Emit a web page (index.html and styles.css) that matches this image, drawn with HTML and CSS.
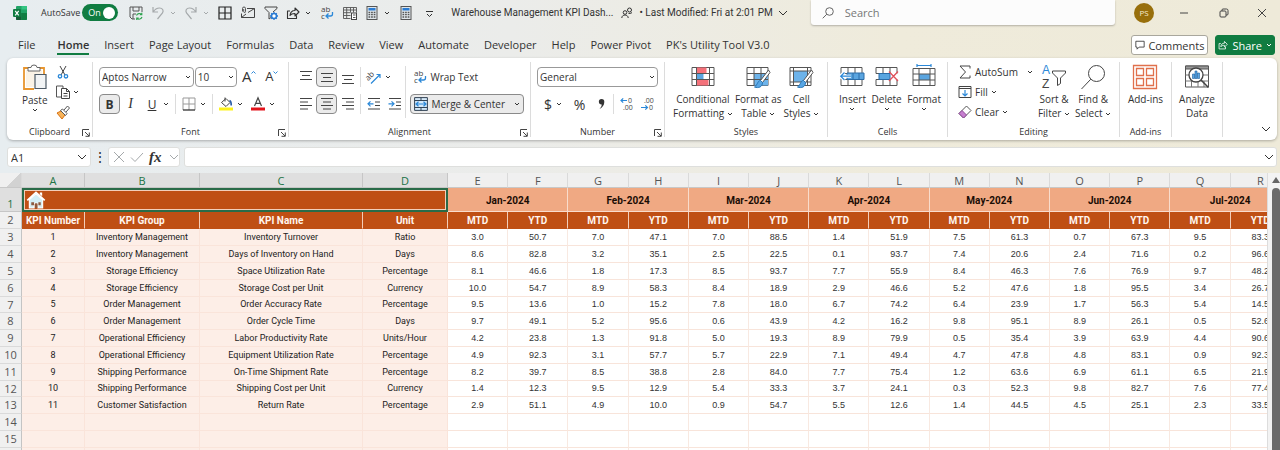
FILE: index.html
```html
<!DOCTYPE html>
<html lang="en">
<head>
    <meta charset="UTF-8">
    <meta name="viewport" content="width=device-width, initial-scale=1.0">
    <title>Warehouse Management KPI Dashboard</title>
    <link rel="stylesheet" href="styles.css">
</head>
<body>
    <!-- Shared symbols -->
    <svg class="symbols" aria-hidden="true">
        <symbol id="chev" viewBox="0 0 6 6"><path d="M1 2l2 2 2-2" fill="none" stroke="currentColor" stroke-width="1"/></symbol>
        <symbol id="chev-lg" viewBox="0 0 10 10"><path d="M1 3l4 4 4-4" fill="none" stroke="currentColor" stroke-width="1"/></symbol>
        <symbol id="launch" viewBox="0 0 8 8"><path d="M.5 7V.5H7M3 3l4 4M7.3 3.5v3.8H3.5" fill="none" stroke="#444" stroke-width="1"/></symbol>
        <symbol id="calc" viewBox="0 0 12 14">
            <rect x="1" y=".5" width="10" height="13" fill="#dfe6ea" stroke="#555"/>
            <rect x="2.5" y="2" width="7" height="2.5" fill="#2b7cd3"/>
            <path d="M2.500 6.500h7M2.500 8.700h7M2.500 11h7" stroke="#555" stroke-width="1.300" stroke-dasharray="1.700 .9"/>
        </symbol>
        <symbol id="wrap" viewBox="0 0 14 14">
            <text x="1" y="6" font-size="8" fill="#444" stroke="none">ab</text>
            <text x="1" y="13" font-size="8" fill="#444" stroke="none">c</text>
            <path d="M12.500 6v2q0 2-2 2H6.500M8.500 7.500L6 10l2.500 2.500" fill="none" stroke="#2b88d8" stroke-width="1.300"/>
        </symbol>
        <symbol id="share" viewBox="0 0 14 14"><path d="M4 5H1.500v7.500h9V9.500M4 9.500C4.300 6 6 4.500 9 4.500V2l4 4-4 4V7.500C6.500 7.400 5 8 4 9.500z" fill="none" stroke="currentColor" stroke-width="1.100" stroke-linejoin="round"/></symbol>
    </svg>

    <header class="title-bar">
        <svg class="app-logo" viewBox="0 0 14 14"><rect x="3" y="0" width="11" height="14" rx="1" fill="#21a366"/><path d="M3 7h5.500v7H4q-1 0-1-1z" fill="#185c37"/><path d="M8.500 7H14v6q0 1-1 1H8.500z" fill="#107c41"/><path d="M8.500 0H13q1 0 1 1v2.500H8.500z" fill="#33c481"/><rect y="3" width="8" height="8" rx="1" fill="#107c41"/><path d="M2.200 4.800l3.500 4.500M5.700 4.800L2.200 9.300" stroke="#fff" stroke-width="1.200"/></svg>
        <label class="autosave">AutoSave
            <span class="toggle"><input type="checkbox" checked><span>On</span></span>
        </label>
        <div class="quick-tools">
            <button class="tool" aria-label="Save"><svg viewBox="0 0 14 14"><path d="M6 13H3L1 11V1h12v5M4 1v4h6V1M4 13V8h3" fill="none" stroke="#555"/><path d="M7.500 9.500a3 3 0 015-1M13 11a3 3 0 01-5 1.300M12.800 6.800v2h-2M7.700 14v-2h2" fill="none" stroke="#2ea44f" stroke-width="1.100"/></svg></button>
            <button class="tool drop faded" aria-label="Undo"><svg viewBox="0 0 14 14"><path d="M2 1v5h5M2.200 6C4 3 6 2 8.500 2c3 0 4.500 2.500 3 5L6.500 13" fill="none" stroke="currentColor" stroke-width="1.200"/></svg><svg class="chev"><use href="#chev"/></svg></button>
            <button class="tool drop faded" aria-label="Redo"><svg viewBox="0 0 14 14"><path d="M12 1v5H7M11.800 6C10 3 8 2 5.500 2c-3 0-4.500 2.500-3 5l5 6" fill="none" stroke="currentColor" stroke-width="1.200"/></svg><svg class="chev"><use href="#chev"/></svg></button>
            <button class="tool" aria-label="Borders"><svg viewBox="0 0 14 14"><path d="M1 1h12v12H1zM7 1v12M1 7h12" fill="none" stroke="#222" stroke-width="1.200"/></svg></button>
            <button class="tool" aria-label="Email"><svg viewBox="0 0 14 14"><path d="M6 2.500h7.500v9H.5V7.500M7 6.500l6.500-4M.5 11.500L5 8" fill="none" stroke="#444"/><path d="M1.500 5.500V2.500q0-1.500 1.500-1.500t1.500 1.500v3q0 1-.9 1t-.9-1V3" fill="none" stroke="#444" stroke-width=".9"/></svg></button>
            <button class="tool" aria-label="Filter"><svg viewBox="0 0 14 14"><path d="M1 1h12v1.500L9 6M1 1v1.500l4 4V13l2-1.500" fill="none" stroke="#444"/><circle cx="10" cy="10" r="2.500" fill="#fff" stroke="#2b7cd3" stroke-width="1.600"/><path d="M10 6v1.500M10 12.500V14M6 10h1.500M12.500 10H14M7.200 7.200l1 1M11.800 11.800l1 1M12.800 7.200l-1 1M7.200 12.800l1-1" stroke="#2b7cd3" stroke-width="1.300"/></svg></button>
            <button class="tool drop" aria-label="Send"><svg><use href="#share"/></svg><svg class="chev"><use href="#chev"/></svg></button>
            <button class="tool" aria-label="Wrap text"><svg><use href="#wrap"/></svg></button>
            <button class="tool" aria-label="Calculate sheet"><svg viewBox="0 0 14 14"><path d="M7.500 12.500H.5V1.500h13v5M.5 4h13M.5 6.700h7M.5 9.500h7M3.700 1.500v11M7.500 1.500v5M10.500 1.500v5" fill="none" stroke="#555" stroke-width=".9"/><rect x="8.500" y="7" width="5" height="6.500" fill="#fff" stroke="#444"/><path d="M10 9h2.500M10 11.500h2.500" stroke="#555"/></svg></button>
            <button class="tool drop" aria-label="Calculation options"><svg><use href="#calc"/></svg><svg class="chev"><use href="#chev"/></svg></button>
            <button class="tool" aria-label="Calculate now"><svg><use href="#calc"/></svg></button>
            <button class="tool" aria-label="Customize toolbar"><svg viewBox="0 0 14 14"><path d="M4 5.500h7M5 8l2.500 2.500L10 8" fill="none" stroke="#333"/></svg></button>
        </div>
        <div class="file-name">
            <span>Warehouse Management KPI Dash...</span>
            <svg class="people" viewBox="0 0 12 12"><circle cx="4" cy="5.500" r="1.800"/><path d="M.8 11c0-4 6.400-4 6.400 0"/><circle cx="8.500" cy="3" r="2"/><path d="M7.500 6.500q3 0 3.500-1"/></svg>
            <button class="modified">• Last Modified: Fri at 2:01 PM <svg><use href="#chev-lg"/></svg></button>
        </div>
        <label class="search">
            <svg viewBox="0 0 12 12"><circle cx="7.500" cy="4.500" r="3.800"/><path d="M4.800 7.200L.7 11.300"/></svg>
            <input type="text" placeholder="Search" aria-label="Search">
        </label>
        <div class="window-controls">
            <span class="avatar">PS</span>
            <button aria-label="Minimize"><svg viewBox="0 0 10 10"><path d="M1 5h8"/></svg></button>
            <button aria-label="Restore"><svg viewBox="0 0 10 10"><rect x="1" y="3" width="6" height="6" rx="1"/><path d="M3 3V2q0-1 1-1h3.500Q9 1 9 2.500V6q0 1-1 1H7"/></svg></button>
            <button aria-label="Close"><svg viewBox="0 0 10 10"><path d="M1 1l8 8M9 1L1 9"/></svg></button>
        </div>
    </header>

    <nav class="tabs">
        <a href="#" class="file">File</a>
        <a href="#" class="active">Home</a>
        <a href="#">Insert</a>
        <a href="#">Page Layout</a>
        <a href="#">Formulas</a>
        <a href="#">Data</a>
        <a href="#">Review</a>
        <a href="#">View</a>
        <a href="#">Automate</a>
        <a href="#">Developer</a>
        <a href="#">Help</a>
        <a href="#">Power Pivot</a>
        <a href="#">PK's Utility Tool V3.0</a>
        <div class="tab-actions">
            <button class="comments"><svg viewBox="0 0 12 12"><path d="M1 1.500h10v7H5L2.500 11V8.500H1z" fill="none" stroke="#333"/></svg>Comments</button>
            <button class="share"><svg><use href="#share"/></svg>Share<svg class="chev"><use href="#chev"/></svg></button>
        </div>
    </nav>

    <section class="ribbon">
        <div class="group clipboard">
            <div class="group-body">
                <button class="big"><svg class="paste-icon" viewBox="0 0 24 27"><path d="M11 25H1V4h20v6" fill="#fff" stroke="#e8952e" stroke-width="1.800"/><path d="M3 6h16v4h-7v13H3z" fill="#fbf3e6"/><path d="M5 7V3.500h3q0-2.500 3-2.500t3 2.500h3V7z" fill="#fff" stroke="#666"/><path d="M12 10.500h11v14H12z" fill="#f2f4f5" stroke="#4d5a66" stroke-width="1.200"/></svg><span>Paste</span><svg class="chev"><use href="#chev"/></svg></button>
                <div class="stack">
                    <button class="tool" aria-label="Cut"><svg viewBox="0 0 14 14"><path d="M4 1l5 9M10 1L5 10" stroke="#444" fill="none"/><circle cx="4" cy="11.300" r="1.700" fill="none" stroke="#2b88d8" stroke-width="1.300"/><circle cx="10" cy="11.300" r="1.700" fill="none" stroke="#2b88d8" stroke-width="1.300"/></svg></button>
                    <button class="tool drop" aria-label="Copy"><svg viewBox="0 0 14 14"><path d="M5 12H.5V1H7v2" fill="none" stroke="#555"/><path d="M5.500 3.500h5l3 3v7h-8zM10.500 3.500v3h3M7.500 8.500h4M7.500 11h4" fill="#fff" stroke="#444"/></svg><svg class="chev"><use href="#chev"/></svg></button>
                    <button class="tool" aria-label="Format painter"><svg viewBox="0 0 14 14"><path d="M1 8l4-2 4 4-3 4z" fill="#f7b45b" stroke="#d9700f"/><path d="M4.500 5.500l5 5 1.500-2-4.500-4.500zM8 5l3.500-4 2 2L10 7" fill="#fff" stroke="#555"/></svg></button>
                </div>
            </div>
            <div class="group-label">Clipboard<button aria-label="Clipboard settings"><svg><use href="#launch"/></svg></button></div>
        </div>

        <div class="group font">
            <div class="group-body rows">
                <div class="row">
                    <select class="font-name" aria-label="Font"><option>Aptos Narrow</option></select>
                    <select class="font-size" aria-label="Font size"><option>10</option></select>
                    <button class="tool letter" aria-label="Increase font size">A<svg class="caret" viewBox="0 0 5 5"><path d="M.5 3.500l2-2 2 2"/></svg></button>
                    <button class="tool letter small" aria-label="Decrease font size">A<svg class="caret" viewBox="0 0 5 5"><path d="M.5 1.500l2 2 2-2"/></svg></button>
                </div>
                <div class="row">
                    <button class="tool pressed" aria-label="Bold"><b>B</b></button>
                    <button class="tool italic" aria-label="Italic">I</button>
                    <button class="tool drop" aria-label="Underline"><u>U</u><svg class="chev"><use href="#chev"/></svg></button>
                    <span class="sep"></span>
                    <button class="tool drop" aria-label="Borders"><svg viewBox="0 0 14 14"><path d="M1 1h12M1 1v12M13 1v12M7 1v12M1 7h12" stroke="#999" fill="none"/><path d="M1 13h12" stroke="#333" stroke-width="1.300"/></svg><svg class="chev"><use href="#chev"/></svg></button>
                    <span class="sep"></span>
                    <button class="tool drop" aria-label="Fill color"><svg viewBox="0 0 14 14"><path d="M2.500 5.500L7 1.500l4 4-4 4zM6 .5v4" fill="#fff" stroke="#444"/><path d="M10.500 3.500q2 1 1.700 5" fill="none" stroke="#2b5fa8" stroke-width="1.600"/><path d="M0 10.500h14v3H0z" fill="#fdf21c"/></svg><svg class="chev"><use href="#chev"/></svg></button>
                    <button class="tool drop" aria-label="Font color"><svg viewBox="0 0 14 14"><path d="M3.500 9L7 .8 10.500 9M4.700 6.300h4.600" fill="none" stroke="#444" stroke-width="1.200"/><path d="M0 10.500h14v3H0z" fill="#e3131b"/></svg><svg class="chev"><use href="#chev"/></svg></button>
                </div>
            </div>
            <div class="group-label">Font<button aria-label="Font settings"><svg><use href="#launch"/></svg></button></div>
        </div>

        <div class="group alignment">
            <div class="group-body">
                <div class="rows">
                    <div class="row">
                        <button class="tool" aria-label="Top align"><svg viewBox="0 0 14 14"><path d="M1 1.500h12M3 5.500h8M1 9.500h12"/></svg></button>
                        <button class="tool pressed" aria-label="Middle align"><svg viewBox="0 0 14 14"><path d="M1 3.500h12M3 7.500h8M1 11.500h12"/></svg></button>
                        <button class="tool" aria-label="Bottom align"><svg viewBox="0 0 14 14"><path d="M1 5.500h12M3 9.500h8M1 13.500h12"/></svg></button>
                        <span class="sep"></span>
                        <button class="tool drop" aria-label="Orientation"><svg viewBox="0 0 14 14"><text x="-1" y="8" font-size="8" transform="rotate(-45 4 7)" class="glyph">ab</text><path d="M4 13.500l9-9M9.500 4.500H13V8" class="blue"/></svg><svg class="chev"><use href="#chev"/></svg></button>
                    </div>
                    <div class="row">
                        <button class="tool" aria-label="Align left"><svg viewBox="0 0 14 14"><path d="M1 1.500h12M1 5h8M1 8.500h12M1 12h8"/></svg></button>
                        <button class="tool pressed" aria-label="Center"><svg viewBox="0 0 14 14"><path d="M1 1.500h12M3 5h8M1 8.500h12M3 12h8"/></svg></button>
                        <button class="tool" aria-label="Align right"><svg viewBox="0 0 14 14"><path d="M1 1.500h12M5 5h8M1 8.500h12M5 12h8"/></svg></button>
                        <span class="sep"></span>
                        <button class="tool" aria-label="Decrease indent"><svg viewBox="0 0 14 14"><path d="M1 1.500h12M8 5h5M8 8.500h5M1 12h12"/><path d="M6.500 6.800H1M3.500 4.300L1 6.800l2.500 2.500" class="blue"/></svg></button>
                        <button class="tool" aria-label="Increase indent"><svg viewBox="0 0 14 14"><path d="M1 1.500h12M8 5h5M8 8.500h5M1 12h12"/><path d="M.5 6.800H6M3.500 4.300L6 6.800 3.500 9.300" class="blue"/></svg></button>
                    </div>
                </div>
                <span class="sep tall"></span>
                <div class="rows">
                    <button class="wide"><svg><use href="#wrap"/></svg>Wrap Text</button>
                    <button class="wide pressed"><svg viewBox="0 0 14 14"><path d="M.6.600h12.800v12.800H.6z" fill="#d5e9f9" stroke="#345"/><path d="M.6 3.500h12.800M.6 10.500h12.800M7 .6v3M7 10.500v3" stroke="#345" fill="none"/><path d="M2 7h10M4.500 4.800L2 7l2.500 2.200M9.500 4.800L12 7 9.500 9.200" class="blue"/></svg>Merge &amp; Center<svg class="chev"><use href="#chev"/></svg></button>
                </div>
            </div>
            <div class="group-label">Alignment<button aria-label="Alignment settings"><svg><use href="#launch"/></svg></button></div>
        </div>

        <div class="group number">
            <div class="group-body rows">
                <div class="row"><select class="number-format" aria-label="Number format"><option>General</option></select></div>
                <div class="row">
                    <button class="tool drop sign" aria-label="Currency">$<svg class="chev"><use href="#chev"/></svg></button>
                    <button class="tool sign" aria-label="Percent">%</button>
                    <button class="tool" aria-label="Comma style"><svg viewBox="0 0 14 14"><path d="M7.500 2a2.800 2.800 0 012.800 3C10.300 8 8.500 10.500 5.500 12c1.500-1.800 2.300-3 2.200-4.500A2.700 2.700 0 117.500 2z" fill="#333"/></svg></button>
                    <span class="sep"></span>
                    <button class="tool" aria-label="Increase decimal"><svg viewBox="0 0 14 14"><path d="M7 3.500H1M3.200 1.300L1 3.500l2.200 2.200" class="blue"/><text x="8" y="6" font-size="7" class="glyph">0</text><text x="3" y="13" font-size="7" class="glyph">.00</text></svg></button>
                    <button class="tool" aria-label="Decrease decimal"><svg viewBox="0 0 14 14"><path d="M0 10.500h6.500M4.300 8.300l2.200 2.200-2.200 2.200" class="blue"/><text x="3" y="6" font-size="7" class="glyph">.00</text><text x="8" y="13" font-size="7" class="glyph">0</text></svg></button>
                </div>
            </div>
            <div class="group-label">Number<button aria-label="Number settings"><svg><use href="#launch"/></svg></button></div>
        </div>

        <div class="group styles">
            <div class="group-body">
                <button class="big"><svg viewBox="0 0 24 24"><path d="M1 2.500h22v18H1z" fill="#fff" stroke="#555"/><path d="M5.500 2.500h10v6h-10zM5.500 14.500h12v6h-12z" fill="#f4717a"/><path d="M5.500 8.500h7v6h-7z" fill="#5aa5e0"/><path d="M1 8.500h22M1 14.500h22M5.500 2.500v18M18.500 2.500v18" stroke="#555" fill="none"/></svg><span>Conditional<br>Formatting <svg class="chev"><use href="#chev"/></svg></span></button>
                <button class="big"><svg viewBox="0 0 24 24"><path d="M1 2.500h21v18H1z" fill="#fff" stroke="#555"/><path d="M8 8.500h14v12H8z" fill="#6db3ea"/><path d="M1 8.500h21M1 14.500h21M8 2.500v18M15 2.500v18" stroke="#555" fill="none"/><path d="M22.500 5l-8 10.500 2 2L24 7.500z" fill="#fff" stroke="#555"/><path d="M14.500 15.500c-3 0-2.500 4-6 6.500 4 1.500 8 0 8-4.500z" fill="#58a6e4" stroke="#2b78b8"/></svg><span>Format as<br>Table <svg class="chev"><use href="#chev"/></svg></span></button>
                <button class="big"><svg viewBox="0 0 24 24"><path d="M1 2.500h21v18H1z" fill="#fff" stroke="#555"/><path d="M4.500 6h14v11h-14z" fill="#6db3ea"/><path d="M1 6h21M1 17h21M4.500 2.500v18M18.500 2.500v18" stroke="#555" fill="none"/><path d="M22.500 5l-8 10.500 2 2L24 7.500z" fill="#fff" stroke="#555"/><path d="M14.500 15.500c-3 0-2.500 4-6 6.500 4 1.500 8 0 8-4.500z" fill="#58a6e4" stroke="#2b78b8"/></svg><span>Cell<br>Styles <svg class="chev"><use href="#chev"/></svg></span></button>
            </div>
            <div class="group-label">Styles</div>
        </div>

        <div class="group cells">
            <div class="group-body">
                <button class="big"><svg viewBox="0 0 24 24"><path d="M1 2.500h21v18H1z" fill="#fff" stroke="#555"/><path d="M1 8.500h21M1 14.500h21M8 2.500v18M15 2.500v18" stroke="#555" fill="none"/><path d="M7 8h17v6.500H7z" fill="#5aa5e0" stroke="#2b6ca8"/><path d="M13 8v6.500M19 8v6.500" stroke="#2b6ca8"/><path d="M11 11.200H0M4.500 7L0 11.200l4.500 4.300" fill="none" stroke="#fff" stroke-width="3"/><path d="M11 11.200H.7M4.500 7.500L.7 11.200l3.800 3.800" class="blue"/></svg><span>Insert</span><svg class="chev"><use href="#chev"/></svg></button>
                <button class="big"><svg viewBox="0 0 24 24"><path d="M1 8.500v-6h21v6M1 14.500v6h21v-6M8 2.500v6M15 2.500v6M8 14.500v6M15 14.500v6M1 8.500h14M1 14.500h14" fill="none" stroke="#555"/><path d="M4 8.500h11v6H4z" fill="#5aa5e0" stroke="#2b6ca8"/><path d="M14 6.500l9 9.500M23 6.500L14 16" stroke="#e0525c" stroke-width="1.300" fill="none"/></svg><span>Delete</span><svg class="chev"><use href="#chev"/></svg></button>
                <button class="big"><svg viewBox="0 0 24 24"><path d="M5 .5h14M5-1v3M19-1v3" class="blue"/><path d="M1 3.500h22v17H1z" fill="#fff" stroke="#555"/><path d="M7 9h11v6H7z" fill="#5aa5e0"/><path d="M1 9h22M1 15h22M7 3.500v17M18 3.500v17" stroke="#555" fill="none"/></svg><span>Format</span><svg class="chev"><use href="#chev"/></svg></button>
            </div>
            <div class="group-label">Cells</div>
        </div>

        <div class="group editing">
            <div class="group-body">
                <div class="stack">
                    <button class="line"><svg viewBox="0 0 14 14"><path d="M12 3.500V1H2l5.500 6L2 13h10v-2.500" fill="none" stroke="#444"/></svg>AutoSum<svg class="chev far"><use href="#chev"/></svg></button>
                    <button class="line"><svg viewBox="0 0 14 14"><path d="M1 1.500h12v11H1zM1 3.500h12" fill="#fff" stroke="#444"/><path d="M7 5v6M4.500 8.500L7 11l2.500-2.500" class="blue"/></svg>Fill<svg class="chev"><use href="#chev"/></svg></button>
                    <button class="line"><svg viewBox="0 0 14 14"><path d="M1 8.500L8.500 1l4.500 4.500L5.500 13z" fill="#fff" stroke="#555"/><path d="M1 8.500L4 5.500 8.500 10l-3 3z" fill="#c77fd0" stroke="#8f4a99"/></svg>Clear<svg class="chev"><use href="#chev"/></svg></button>
                </div>
                <button class="big"><svg viewBox="0 0 24 24" class="sort-icon"><text x="0" y="9" font-size="12" fill="#2b88d8">A</text><text x="0" y="23" font-size="12" fill="#444">Z</text><path d="M10.500 6h13v2l-5 5v5.500l-3 2V13l-5-5z" fill="#fff" stroke="#444"/></svg><span>Sort &amp;<br>Filter <svg class="chev"><use href="#chev"/></svg></span></button>
                <button class="big"><svg viewBox="0 0 24 24"><circle cx="15.500" cy="8.500" r="8" fill="none" stroke="#444"/><path d="M9.800 14.200L.5 24" stroke="#444"/></svg><span>Find &amp;<br>Select <svg class="chev"><use href="#chev"/></svg></span></button>
            </div>
            <div class="group-label">Editing</div>
        </div>

        <div class="group addins">
            <div class="group-body">
                <button class="big"><svg viewBox="0 0 24 24"><path d="M.5.500h23v23H.5zM3.500 3.500h7v7h-7zM13.500 3.500h7v7h-7zM3.500 13.500h7v7h-7zM13.500 13.500h7v7h-7z" fill="none" stroke="#e0704c" stroke-width="1.300"/></svg><span>Add-ins</span></button>
            </div>
            <div class="group-label">Add-ins</div>
        </div>

        <div class="group analyze">
            <div class="group-body">
                <button class="big"><svg viewBox="0 0 24 24"><path d="M.5 1h23v21H.5z" fill="#fff" stroke="#555"/><path d="M.5 1h23v3H.5z" fill="#999" stroke="#555"/><path d="M.5 10h23M.5 16h23M6.500 16v6M13 16v6M19 16v6" stroke="#777" fill="none"/><circle cx="11" cy="10" r="7" fill="#fff" stroke="#444" stroke-width="1.300"/><path d="M16 15l7.500 7.500" stroke="#444" stroke-width="1.500"/><path d="M7.500 9h2v4.500h-2zM10 6h2v7.500h-2zM12.500 8h2v5.500h-2z" fill="#58a6e4" stroke="#205f9e" stroke-width=".6"/></svg><span>Analyze<br>Data</span></button>
            </div>
            <div class="group-label"></div>
        </div>

        <button class="collapse" aria-label="Collapse ribbon"><svg><use href="#chev-lg"/></svg></button>
    </section>

    <section class="formula-bar">
        <div class="name-box"><input type="text" value="A1" aria-label="Name box"><button aria-label="Names"><svg><use href="#chev-lg"/></svg></button></div>
        <span class="dots">⋮</span>
        <div class="fx-tools">
            <button aria-label="Cancel" class="faded"><svg viewBox="0 0 10 10"><path d="M0 0l10 10M10 0L0 10" fill="none" stroke="currentColor"/></svg></button>
            <button aria-label="Enter" class="faded"><svg viewBox="0 0 10 10"><path d="M-1 5.500L3 9.500 11 1" fill="none" stroke="currentColor"/></svg></button>
            <button aria-label="Insert function" class="fx">fx</button>
            <button aria-label="Functions" class="faded"><svg><use href="#chev-lg"/></svg></button>
        </div>
        <div class="formula-input"><input type="text" aria-label="Formula"><button aria-label="Expand formula bar"><svg><use href="#chev-lg"/></svg></button></div>
    </section>

    <main class="sheet">
        <div class="sheet-view">
            <table>
                <colgroup id="columns">
                    <col class="col-head"><col class="col-a"><col class="col-b"><col class="col-c"><col class="col-d">
                </colgroup>
                <thead>
                    <tr class="letters" id="letters"></tr>
                </thead>
                <tbody>
                    <tr class="months" id="months">
                        <th class="row-head selected">1</th>
                        <td colspan="4" class="active-cell"><a href="#" aria-label="Home sheet"><svg viewBox="0 0 20 19"><path d="M3 9v9h5v-5h4v5h5V9l-7-6z" fill="#d4eef5" stroke="#fff" stroke-width="1.200"/><path d="M14 1.500h2.500v4L14 3.500z" fill="#fff"/><path d="M.8 10L10 1.500l9.200 8.500" fill="none" stroke="#fff" stroke-width="1.800"/><path d="M5 12h3v3H5zM12.500 12h2.500v3h-2.500zM9 13h2.500v5H9z" fill="#8b5a40"/></svg></a></td>
                    </tr>
                    <tr class="headings" id="headings">
                        <th class="row-head">2</th>
                        <th>KPI Number</th><th>KPI Group</th><th>KPI Name</th><th>Unit</th>
                    </tr>
                </tbody>
                <tbody id="kpi-rows"></tbody>
            </table>
        </div>
        <div class="scrollbar"><span class="arrow"></span><span class="thumb"></span></div>
    </main>

    <script src="app.js"></script>
</body>
</html>
```
FILE: styles.css
```css
* {
    box-sizing: border-box;
}

body {
    margin: 0;
    height: 100vh;
    display: flex;
    flex-direction: column;
    overflow: hidden;
    font-family: 'Open Sans', 'Noto Sans', sans-serif;
    font-size: 10px;
    color: #333;
    background: linear-gradient(90deg, #e7edf0 0%, #ebecea 40%, #efebdb 70%, #eeead9 100%);
}

button, input, select {
    font: inherit;
    color: inherit;
    background: none;
    border: none;
    padding: 0;
    margin: 0;
    outline: none;
}

button {
    display: flex;
    align-items: center;
    justify-content: center;
    white-space: nowrap;
}

a {
    color: inherit;
    text-decoration: none;
}

svg {
    display: block;
    flex: none;
    width: 14px;
    height: 14px;
    overflow: visible;
}

svg.chev {
    width: 6px;
    height: 6px;
}

.symbols {
    display: none;
}

/* Title bar */
.title-bar {
    display: flex;
    align-items: center;
    height: 25px;
    flex: none;
    padding-left: 13px;
}

.autosave {
    display: flex;
    align-items: center;
    gap: 2px;
    margin-left: 14px;
    font-size: 9px;
}

.toggle {
    display: flex;
    align-items: center;
    width: 36px;
    height: 17px;
    padding: 0 3px 0 6px;
    border-radius: 9px;
    background: #107c41;
    color: #fff;
}

.toggle input {
    appearance: none;
    order: 2;
    margin-left: auto;
    width: 12px;
    height: 12px;
    border-radius: 50%;
    background: #fff;
}

.quick-tools {
    display: flex;
    margin-left: 6px;
}

.tool {
    width: 23px;
    height: 20px;
}

.tool.drop {
    width: 33px;
    gap: 5px;
}

.faded {
    color: #a5a9ab;
}

.file-name {
    display: flex;
    align-items: center;
    margin-left: 11px;
    gap: 7px;
    font-family: Roboto, 'Open Sans', sans-serif;
    white-space: nowrap;
}

.people {
    width: 12px;
    height: 12px;
    fill: none;
    stroke: #333;
}

.modified {
    gap: 5px;
}

.modified svg,
.name-box svg,
.fx-tools svg,
.formula-input svg,
.collapse svg {
    width: 10px;
    height: 10px;
}

.search {
    display: flex;
    align-items: center;
    gap: 11px;
    flex: 1;
    height: 25px;
    margin-left: 23px;
    padding-left: 11px;
    background: #fcfcfc;
    border-radius: 0 0 3px 3px;
    box-shadow: 0 1px 2px rgba(0, 0, 0, 0.25);
}

.search svg {
    width: 12px;
    height: 12px;
    fill: none;
    stroke: #666;
}

.search input {
    width: 100%;
    font-size: 11px;
}

.search input::placeholder {
    color: #777;
}

.window-controls {
    display: flex;
    align-items: center;
    margin-left: 19px;
}

.window-controls button {
    width: 40px;
    height: 24px;
}

.window-controls button:first-of-type {
    margin-left: 10px;
}

.window-controls button:last-child {
    width: 36px;
}

.window-controls svg {
    width: 10px;
    height: 10px;
    fill: none;
    stroke: #444;
}

.avatar {
    width: 20px;
    height: 20px;
    border-radius: 50%;
    background: #986f0b;
    color: #f5ead0;
    font-size: 8px;
    line-height: 20px;
    text-align: center;
}

/* Tabs */
.tabs {
    display: flex;
    align-items: center;
    gap: 15px;
    height: 33px;
    flex: none;
    padding: 7px 5px 0 18px;
    font-size: 11px;
    white-space: nowrap;
}

.tabs a {
    padding-top: 2px;
    line-height: 16px;
    border-bottom: 2px solid transparent;
}

.tabs .file {
    margin-right: 7px;
}

.tabs .active {
    font-weight: 600;
    border-color: #107c41;
}

.tab-actions {
    display: flex;
    gap: 7px;
    margin-left: auto;
}

.tab-actions button {
    height: 20px;
    gap: 3px;
    border-radius: 3px;
    border: 1px solid #a9a79d;
    background: #fff;
    padding: 0 3px;
}

.tab-actions svg:first-child {
    width: 10px;
    height: 10px;
}

.tab-actions .share {
    background: #107c41;
    border-color: #107c41;
    color: #fff;
    padding: 0 2px;
    gap: 4px;
}

/* Ribbon */
.ribbon {
    display: flex;
    height: 82px;
    flex: none;
    margin: 0 3px 0 7px;
    padding-top: 4px;
    background: #fff;
    border-radius: 6px;
    box-shadow: 0 1px 3px rgba(0, 0, 0, 0.28);
}

.group {
    display: flex;
    flex-direction: column;
    flex: none;
    height: 75px;
    padding: 0 6px;
    border-right: 1px solid #dcdcdc;
}

.clipboard { width: 86px; }
.font { width: 196px; }
.alignment { width: 242px; }
.number { width: 134px; }
.styles { width: 163px; }
.cells { width: 120px; }
.editing { width: 172px; }
.addins { width: 52px; }
.analyze { width: 51px; }

.group-body {
    display: flex;
    flex: 1;
}

.group-label {
    display: flex;
    justify-content: center;
    position: relative;
    height: 12px;
    line-height: 14px;
    font-size: 9px;
}

.group-label button {
    position: absolute;
    right: -4px;
    top: 4px;
}

.group-label svg {
    width: 8px;
    height: 8px;
}

.rows {
    display: flex;
    flex-direction: column;
    gap: 7px;
    padding-top: 5px;
}

.row {
    display: flex;
    align-items: center;
    height: 20px;
}

.row .tool {
    width: 21px;
}

.row .tool.drop {
    width: 32px;
    gap: 4px;
}

.sep {
    width: 1px;
    height: 20px;
    margin: 0 2px;
    background: #dcdcdc;
}

.sep.tall {
    height: 52px;
    margin: 4px 4px 0 auto;
}

.pressed {
    background: #ebebeb;
    border: 1px solid #8a8a8a;
    border-radius: 4px;
}

select {
    appearance: none;
    height: 20px;
    padding-left: 2px;
    border: 1px solid #999;
    border-radius: 4px;
    background: url("data:image/svg+xml,%3Csvg xmlns='http://www.w3.org/2000/svg' width='6' height='6'%3E%3Cpath d='M1 2l2 2 2-2' fill='none' stroke='%23333'/%3E%3C/svg%3E") no-repeat right 2px center;
}

.font-name { width: 97px; }
.font-size { width: 43px; margin-left: 1px; }
.number-format { width: 121px; }

.tool.letter {
    align-items: flex-start;
    font-size: 15px;
    line-height: 18px;
    margin-left: 2px;
}

.tool.letter.small {
    font-size: 13px;
}

.tool .caret {
    width: 5px;
    height: 5px;
    margin-top: 3px;
    fill: none;
    stroke: #2b88d8;
}

.tool b,
.tool u {
    font-size: 12px;
}

.tool u {
    width: 14px;
}

.tool.italic {
    font-family: 'Liberation Serif', serif;
    font-style: italic;
    font-size: 14px;
}

.tool.sign {
    font-size: 14px;
}

.alignment .rows svg:not(.chev) {
    fill: none;
    stroke: #444;
}

.ribbon .alignment text {
    stroke: none;
}

.ribbon .glyph {
    fill: #444;
}

.ribbon .blue {
    fill: none;
    stroke: #2b88d8;
    stroke-width: 1.2;
}

.sort-icon {
    font-family: 'Liberation Sans', sans-serif;
}

.wide {
    height: 20px;
    gap: 3px;
    padding: 0 3px;
    justify-content: flex-start;
}

.wide .chev {
    margin-left: 6px;
}

.big {
    flex-direction: column;
    justify-content: flex-start;
    line-height: 14px;
}

.big > svg:first-child {
    width: 24px;
    height: 24px;
    margin: 3px 0;
}

.big > svg.paste-icon {
    height: 27px;
    margin: 2px 0;
}

.big span .chev {
    display: inline-block;
    vertical-align: middle;
}

.clipboard .big {
    padding: 0 4px 0 9px;
}

.stack {
    display: flex;
    flex-direction: column;
}

.stack .tool,
.line {
    height: 20px;
}

.stack .tool.drop {
    gap: 3px;
    width: 31px;
}

.styles .group-body {
    justify-content: space-between;
    padding: 0 2px;
}

.cells .group-body {
    justify-content: space-between;
    padding-left: 5px;
}

.editing .group-body {
    gap: 5px;
    padding-left: 4px;
}

.line {
    gap: 3px;
    justify-content: flex-start;
}

.line .far {
    margin-left: 6px;
}

.addins .group-body,
.analyze .group-body {
    justify-content: center;
}

.collapse {
    align-self: flex-end;
    margin: 0 6px 6px auto;
}

/* Formula bar */
.formula-bar {
    display: flex;
    align-items: center;
    height: 20px;
    flex: none;
    margin: 7px 3px 6px 7px;
}

.name-box,
.fx-tools,
.formula-input {
    display: flex;
    align-items: center;
    height: 20px;
    background: #fff;
    border: 1px solid #dedfdd;
    border-radius: 3px;
}

.name-box {
    width: 84px;
    padding: 0 3px;
}

.name-box input {
    flex: 1;
    min-width: 0;
    font-size: 11px;
}

.dots {
    width: 17px;
    text-align: center;
    font-size: 14px;
    line-height: 20px;
}

.fx-tools {
    width: 72px;
    justify-content: space-between;
    padding: 0 0 0 5px;
}

.fx {
    font-family: 'Liberation Serif', serif;
    font-style: italic;
    font-weight: bold;
    font-size: 15px;
}

.formula-input {
    flex: 1;
    margin-left: 4px;
    padding-right: 2px;
}

.formula-input input {
    flex: 1;
}

/* Worksheet */
.sheet {
    display: flex;
    flex: 1;
    min-height: 0;
    background: #fff;
}

.sheet-view {
    flex: 1;
    min-width: 0;
    overflow: hidden;
}

table {
    table-layout: fixed;
    width: calc(100% + 24px);
    border-spacing: 0;
    font-family: Roboto, 'Liberation Sans', sans-serif;
    font-size: 9px;
    line-height: 14px;
    color: #222;
}

.col-head { width: 22px; }
.col-a { width: 63px; }
.col-b { width: 115px; }
.col-c { width: 163px; }
.col-d { width: 85px; }

th, td {
    height: 17px;
    padding: 0;
    text-align: center;
    white-space: nowrap;
    border-right: 1px solid #f8e9e1;
    border-bottom: 1px solid #f8e4da;
}

/* Keeps the average row pitch just under 17px */
#kpi-rows tr:nth-child(5n) > * {
    height: 16px;
    line-height: 13px;
}

.letters th,
.row-head {
    font-family: 'Open Sans', 'Noto Sans', sans-serif;
    font-size: 11px;
    font-weight: normal;
    color: #555;
    background: #f0f0f0;
    border-color: #dadada;
}

.letters th {
    height: 15px;
    line-height: 13px;
    border-bottom-color: #c8c8c8;
}

.row-head {
    border-right-color: #c4c4c4;
}

.letters .selected,
.row-head.selected {
    color: #217346;
    background: #dfdfdf;
    border-color: #c6c6c6;
}

.letters .corner {
    background: linear-gradient(135deg, #f0f0f0 60%, #d2d2d2 60%);
}

.months > * {
    height: 24px;
}

.months .row-head {
    vertical-align: bottom;
}

.months .month {
    padding-top: 2px;
    font-weight: bold;
    font-size: 10px;
    background: #f0a983;
    color: #1b0d05;
    border-color: #f9dccc;
}

.months .active-cell {
    background: #bf4f14;
    border: 2px solid #2a6b48;
    box-shadow: inset 0 0 0 1px #f2cfbb;
}

.active-cell a {
    display: block;
    width: 20px;
    margin-left: 2px;
}

.active-cell svg {
    width: 20px;
    height: 18px;
}

.headings th:not(.row-head) {
    padding-top: 1px;
    background: #bf4f14;
    color: #fff5ee;
    font-size: 10px;
    border-right-color: #f3cdb8;
    border-bottom-color: #bf4f14;
}

.label {
    background: #fdeee7;
    border-color: #fae4da;
}

.value {
    font-family: 'Liberation Sans', sans-serif;
    color: #333;
}

.scrollbar {
    display: flex;
    flex-direction: column;
    align-items: center;
    gap: 5px;
    width: 13px;
    padding: 4px 0 0 4px;
    background: #f3f3f3;
    border-left: 1px solid #ddd;
}

.arrow {
    border: 4px solid transparent;
    border-top: 0;
    border-bottom: 6px solid #666;
}

.thumb {
    flex: 1;
    width: 8px;
    border-radius: 4px 4px 0 0;
    background: #6b6b6b;
}
```
FILE: app.js
```javascript
const months = ['Jan-2024', 'Feb-2024', 'Mar-2024', 'Apr-2024', 'May-2024', 'Jun-2024', 'Jul-2024'];
const lastRow = 20;

// group, name, unit, then MTD / YTD values per month
const kpis = [
    ['Inventory Management', 'Inventory Turnover', 'Ratio', '3.0 50.7 7.0 47.1 7.0 88.5 1.4 51.9 7.5 61.3 0.7 67.3 9.5 83.3'],
    ['Inventory Management', 'Days of Inventory on Hand', 'Days', '8.6 82.8 3.2 35.1 2.5 22.5 0.1 93.7 7.4 20.6 2.4 71.6 0.2 96.6'],
    ['Storage Efficiency', 'Space Utilization Rate', 'Percentage', '8.1 46.6 1.8 17.3 8.5 93.7 7.7 55.9 8.4 46.3 7.6 76.9 9.7 48.2'],
    ['Storage Efficiency', 'Storage Cost per Unit', 'Currency', '10.0 54.7 8.9 58.3 8.4 18.9 2.9 46.6 5.2 47.6 1.8 95.5 3.4 26.7'],
    ['Order Management', 'Order Accuracy Rate', 'Percentage', '9.5 13.6 1.0 15.2 7.8 18.0 6.7 74.2 6.4 23.9 1.7 56.3 5.4 14.5'],
    ['Order Management', 'Order Cycle Time', 'Days', '9.7 49.1 5.2 95.6 0.6 43.9 4.2 16.2 9.8 95.1 8.9 26.1 0.5 52.6'],
    ['Operational Efficiency', 'Labor Productivity Rate', 'Units/Hour', '4.2 23.8 1.3 91.8 5.0 19.3 8.9 79.9 0.5 35.4 3.9 63.9 4.4 90.6'],
    ['Operational Efficiency', 'Equipment Utilization Rate', 'Percentage', '4.9 92.3 3.1 57.7 5.7 22.9 7.1 49.4 4.7 47.8 4.8 83.1 0.9 92.3'],
    ['Shipping Performance', 'On-Time Shipment Rate', 'Percentage', '8.2 39.7 8.5 38.8 2.8 84.0 7.7 75.4 1.2 63.6 6.9 61.1 6.5 21.9'],
    ['Shipping Performance', 'Shipping Cost per Unit', 'Currency', '1.4 12.3 9.5 12.9 5.4 33.3 3.7 24.1 0.3 52.3 9.8 82.7 7.6 77.4'],
    ['Customer Satisfaction', 'Return Rate', 'Percentage', '2.9 51.1 4.9 10.0 0.9 54.7 5.5 12.6 1.4 44.5 4.5 25.1 2.3 33.5']
];

function addCell(row, tag, text, className) {
    const cell = document.createElement(tag);
    cell.textContent = text;
    if (className) {
        cell.className = className;
    }
    row.appendChild(cell);
    return cell;
}

// Column letters
const letters = document.getElementById('letters');
addCell(letters, 'th', '', 'corner');
'ABCDEFGHIJKLMNOPQR'.split('').forEach((letter, i) => {
    addCell(letters, 'th', letter, i < 4 ? 'selected' : '');
});

// Month headings
months.forEach(month => {
    addCell(document.getElementById('months'), 'th', month, 'month').colSpan = 2;
    addCell(document.getElementById('headings'), 'th', 'MTD');
    addCell(document.getElementById('headings'), 'th', 'YTD');
    document.getElementById('columns').append(document.createElement('col'), document.createElement('col'));
});

// KPI rows, followed by empty ones
const body = document.getElementById('kpi-rows');
for (let n = 3; n <= lastRow; n++) {
    const row = document.createElement('tr');
    const kpi = kpis[n - 3];
    addCell(row, 'th', n, 'row-head');
    const labels = kpi ? [n - 2, kpi[0], kpi[1], kpi[2]] : ['', '', '', ''];
    const values = kpi ? kpi[3].split(' ') : Array(months.length * 2).fill('');
    labels.forEach(text => addCell(row, 'td', text, 'label'));
    values.forEach(text => addCell(row, 'td', text, 'value'));
    body.appendChild(row);
}
```
